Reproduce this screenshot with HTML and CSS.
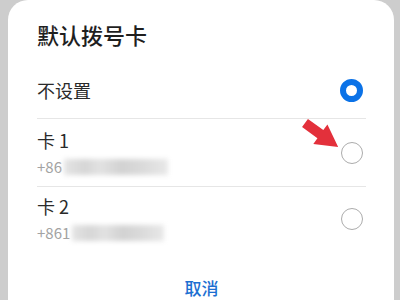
FILE: index.html
```html
<!DOCTYPE html>
<html lang="zh-CN">
<head>
    <meta charset="UTF-8">
    <meta name="viewport" content="width=device-width, initial-scale=1.0">
    <title>默认拨号卡</title>
    <link rel="stylesheet" href="styles.css">
</head>
<body>
    <div id="sheet">
        <div class="title">默认拨号卡</div>
        <div class="list">
            <div class="row single">
                <span class="label">不设置</span>
                <span class="radio on"></span>
            </div>
            <div class="row">
                <span class="lines">
                    <span class="label">卡 1</span>
                    <span class="num">+86<span class="blur b1"></span></span>
                </span>
                <span class="radio"></span>
            </div>
            <div class="row last">
                <span class="lines">
                    <span class="label">卡 2</span>
                    <span class="num">+861<span class="blur b2"></span></span>
                </span>
                <span class="radio"></span>
            </div>
        </div>
        <div class="cancel">取消</div>
    </div>
    <!-- red pointer over the card 1 radio -->
    <svg class="arrow" width="60" height="50" viewBox="0 0 60 50">
        <polygon points="0,-5 19,-5 19,-12 41,0 19,12 19,5 0,5" fill="#e3303b" transform="translate(9,13) rotate(36)"/>
    </svg>
</body>
</html>
```

FILE: styles.css
```css
body {
    margin: 0;
    background: #cdcdcd;
    font-family: "Noto Sans CJK SC", "Noto Sans", sans-serif;
    width: 400px;
    height: 300px;
    overflow: hidden;
    position: relative;
}

#sheet {
    margin: 0 6px 0 8px;
    height: 300px;
    background: #fff;
    border-radius: 20px 20px 0 0;
    padding: 0 28px 0 29px;
    box-sizing: border-box;
}

.title {
    padding-top: 19px;
    font-size: 22px;
    line-height: 30px;
    font-weight: 500;
    color: #1f1f1f;
}

.list {
    margin-top: 13px;
}

.row {
    display: flex;
    align-items: center;
    justify-content: space-between;
    height: 67px;
    border-bottom: 1px solid #e6e6e6;
}
.row.single {
    height: 56px;
}
.row.last {
    border-bottom: none;
    height: 64px;
}

.lines {
    display: flex;
    flex-direction: column;
    gap: 4px;
}

.label {
    font-size: 18px;
    line-height: 24px;
    color: #2a2a2a;
}

.num {
    font-size: 15px;
    line-height: 22px;
    color: #a3a3a3;
    display: flex;
    align-items: center;
}

.blur {
    display: inline-block;
    height: 16px;
    margin-left: 2px;
    filter: blur(2.5px);
    background: linear-gradient(90deg, #e4e4e4 0%, #d6d6d6 20%, #e2e2e2 35%, #d2d2d2 55%, #dadada 75%, #e8e8e8 100%);
}
.b1 {
    width: 104px;
}
.b2 {
    width: 92px;
}

.radio {
    width: 22px;
    height: 22px;
    border: 1.5px solid #acacac;
    border-radius: 50%;
    box-sizing: border-box;
    margin-right: 3px;
}
.radio.on {
    border: 6px solid #0b72e7;
    width: 23px;
    height: 23px;
}

.cancel {
    margin-top: 28px;
    text-align: center;
    font-size: 17px;
    line-height: 18px;
    font-weight: 500;
    color: #1c6fd1;
}

.arrow {
    position: absolute;
    left: 296px;
    top: 110px;
}
```
